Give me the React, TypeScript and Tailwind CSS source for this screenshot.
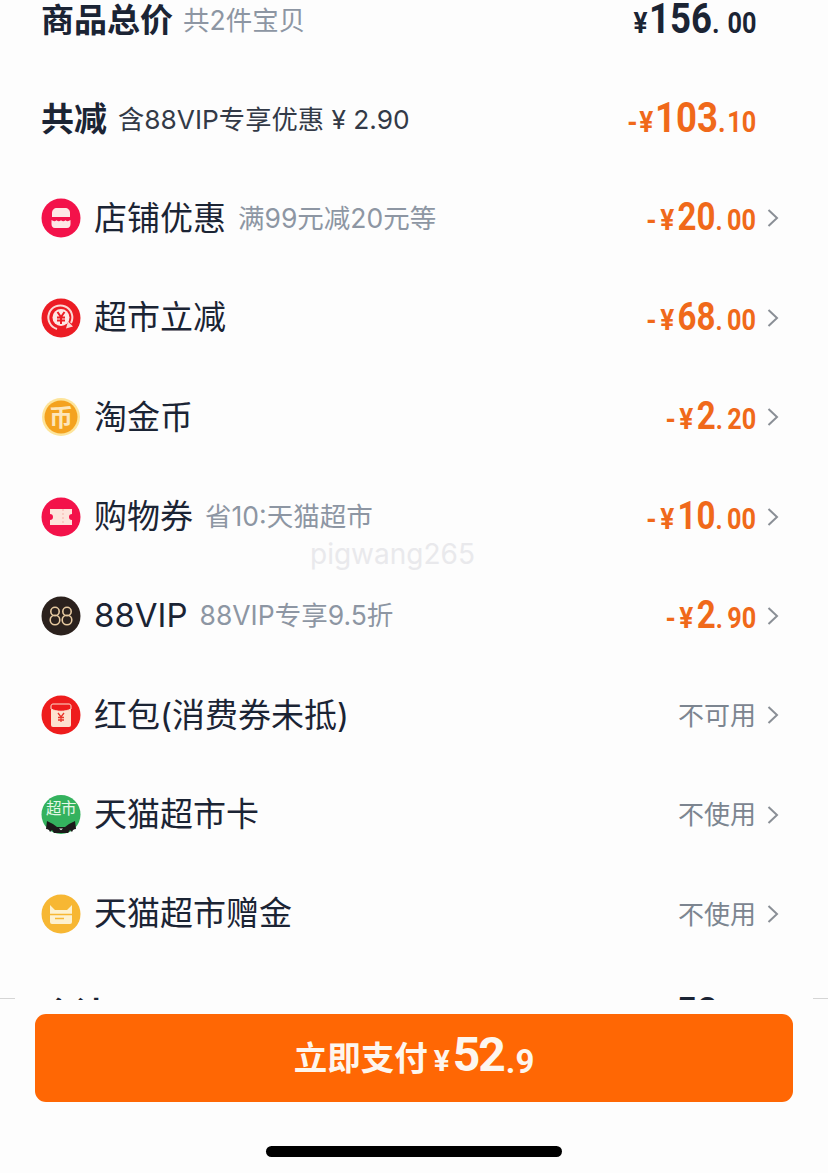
import React from "react";

const CJK = "font-['Inter','Noto_Sans_CJK_SC',sans-serif]";
const NUM = "font-['Roboto','Noto_Sans_CJK_SC',sans-serif]";

function Icon({ kind }: { kind: string }) {
  const cls = "w-10 h-10 shrink-0";
  if (kind === "shop")
    return (
      <svg viewBox="0 0 40 40" className={cls}>
        <circle cx="20" cy="20" r="19.5" fill="#f3124a" />
        <path d="M11 19v-4c0-3 2-5 5-5h8c3 0 5 2 5 5v4z" fill="#fde8e6" />
        <path d="M10.500 22c2 1.500 3.500 1.500 5 .2c1.500 1.300 3 1.300 4.500 0c1.500 1.300 3 1.300 4.500 0c1.500 1.300 3 1.300 5 -.2v4c0 2 -1 4 -3.500 4H14c-2.500 0-3.500-2-3.500-4z" fill="#fde8e6" />
      </svg>
    );
  if (kind === "cut")
    return (
      <svg viewBox="0 0 40 40" className={cls}>
        <circle cx="20" cy="20" r="19.5" fill="#ec1c24" />
        <path d="M16 31a12 12 0 1 1 14-6" fill="none" stroke="#fbd9d5" strokeWidth="2" />
        <path d="M27 23.500l5 5-7 2z" fill="#fbd9d5" />
        <circle cx="20" cy="19.500" r="8.500" fill="#fde8e4" />
        <path d="M16.500 14l3.500 5 3.500-5M16 19.500h8M16 22.500h8M20 19v7" fill="none" stroke="#ec1c24" strokeWidth="2" />
      </svg>
    );
  if (kind === "coin")
    return (
      <svg viewBox="0 0 40 40" className={cls}>
        <circle cx="20" cy="20" r="19" fill="#fde49a" />
        <circle cx="20" cy="20" r="16.500" fill="#f4a21f" />
        <text x="20" y="28.500" textAnchor="middle" fontSize="24" fontWeight="700" fill="#fde6ba" fontFamily="'Noto Sans CJK SC',sans-serif">币</text>
      </svg>
    );
  if (kind === "ticket")
    return (
      <svg viewBox="0 0 40 40" className={cls}>
        <circle cx="20" cy="20" r="19.500" fill="#f3124a" />
        <path d="M9 12h22v5a3 3 0 0 0 0 6v5H9v-5a3 3 0 0 0 0-6z" fill="#fde4dc" />
        <path d="M22 12v16" fill="none" stroke="#f9b9b4" strokeWidth="1.200" strokeDasharray="2 2" />
      </svg>
    );
  if (kind === "vip")
    return (
      <svg viewBox="0 0 40 40" className={cls}>
        <circle cx="20" cy="20" r="19.500" fill="#2b211d" />
        <g fill="none" stroke="#e6c9a0" strokeWidth="1.600">
          <circle cx="14" cy="15.500" r="4.200" />
          <circle cx="14" cy="24" r="4.800" />
          <circle cx="26" cy="15.500" r="4.200" />
          <circle cx="26" cy="24" r="4.800" />
        </g>
      </svg>
    );
  if (kind === "red")
    return (
      <svg viewBox="0 0 40 40" className={cls}>
        <circle cx="20" cy="20" r="19.500" fill="#ee1c1c" />
        <rect x="10" y="9" width="20" height="23" rx="2" fill="#fde2cf" />
        <path d="M10 11c0-1 1-2 2-2h16c1 0 2 1 2 2v3c-6 3-14 3-20 0z" fill="#ee1c1c" stroke="#fde2cf" strokeWidth="1" />
        <path d="M17 18l3 4 3-4M17 22.500h6M17 25h6M20 22v5" fill="none" stroke="#e8352a" strokeWidth="1.300" />
      </svg>
    );
  if (kind === "cat")
    return (
      <svg viewBox="0 0 40 40" className={cls}>
        <circle cx="20" cy="19.500" r="19.500" fill="#34b25e" />
        <text x="20" y="19" textAnchor="middle" fontSize="15.500" fill="#e4f7e6" fontFamily="'Noto Sans CJK SC',sans-serif" letterSpacing="-0.500">超市</text>
        <path d="M5 34l1-8 6 3 4 3h8l4-3 6-3 1 8c-1 0-2 .5-3 1l-1 2-2-2-2 3h-14l-2-3-2 2-1-2c-1-.5-2-1-3-1z" fill="#1c1a1a" />
        <path d="M18 33.500h4l-2 1.800z" fill="#e8e8e8" />
      </svg>
    );
  return (
    <svg viewBox="0 0 40 40" className={cls}>
      <circle cx="20" cy="20" r="19.500" fill="#f7b733" />
      <path d="M9 11l5 5h12l5-5v17a2 2 0 0 1-2 2H11a2 2 0 0 1-2-2z" fill="#fdf1cf" />
      <path d="M9 20.500h22" stroke="#f7b733" strokeWidth="1.500" />
      <path d="M14 24.500h9" stroke="#f7b733" strokeWidth="1.500" />
    </svg>
  );
}

function Money({ prefix, int, dec, tone, big, dotCls }: { prefix?: string; int: string; dec: string; tone: string; big?: boolean; dotCls?: string }) {
  return (
    <span className={`${NUM} ${tone} mb-[2px] inline-block origin-right scale-x-[0.87] font-bold leading-none whitespace-nowrap`}>
      {prefix ? <span className={big ? "text-[30px] tracking-[2px]" : "text-[30px] tracking-[4px]"}>{prefix}</span> : null}
      <span className={big ? "text-[30px] tracking-[2px]" : "text-[30px] tracking-[4px]"}>¥</span>
      <span className={big ? "text-[42px]" : "text-[38px]"}>{int}</span>
      <span className={dotCls ?? (big ? "text-[30px] tracking-[2px]" : "text-[28px] tracking-[5px]")}>.</span>
      <span className="text-[29px]">{dec}</span>
    </span>
  );
}

function Chevron() {
  return (
    <svg viewBox="0 0 12 20" className="w-3 h-5 shrink-0 ml-[11px]">
      <path d="M1.500 2l8.500 8-8.500 8" fill="none" stroke="#8a8f96" strokeWidth="2" />
    </svg>
  );
}

const rows = [
  { icon: "shop", title: "店铺优惠", sub: "满99元减20元等", int: "20", dec: "00" },
  { icon: "cut", title: "超市立减", int: "68", dec: "00" },
  { icon: "coin", title: "淘金币", int: "2", dec: "20" },
  { icon: "ticket", title: "购物券", sub: "省10:天猫超市", int: "10", dec: "00" },
  { icon: "vip", title: "88VIP", sub: "88VIP专享9.5折", int: "2", dec: "90" },
  { icon: "red", title: "红包(消费券未抵)", status: "不可用" },
  { icon: "cat", title: "天猫超市卡", status: "不使用" },
  { icon: "gift", title: "天猫超市赠金", status: "不使用" },
];

export default function App() {
  return (
    <div className={`${CJK} relative w-[828px] h-[1173px] overflow-hidden bg-[#fdfdfd] text-[#1b2434] flex flex-col`}>
      <div className="h-[1000px] shrink-0 overflow-hidden pl-[41px] pr-[49px]">
        <div className="-mt-[30px]">
          <div className="h-[99.4px] flex items-center">
            <span className="mt-[2px] text-[33px] font-bold">商品总价</span>
            <span className="mt-[2px] ml-[10px] text-[26.500px] text-[#8d96a3]">共2件宝贝</span>
            <span className="ml-auto mr-[23px] flex">
              <Money int="156" dec="00" tone="text-[#1b2434]" big dotCls="text-[30px] tracking-[9px]" />
            </span>
          </div>
          <div className="h-[99.4px] flex items-center">
            <span className="mt-[2px] text-[33px] font-bold">共减</span>
            <span className="mt-[2px] ml-[11px] text-[26.300px] text-[#333a47]">含88VIP专享优惠 ¥ 2.90</span>
            <span className="ml-auto mr-[23px] flex">
              <Money prefix="-" int="103" dec="10" tone="text-[#f0691a]" big />
            </span>
          </div>
          {rows.map((r) => (
            <div key={r.title} className="h-[99.4px] flex items-center">
              <Icon kind={r.icon} />
              <span className="ml-[13px] text-[33px] whitespace-nowrap">{r.title}</span>
              {r.sub ? <span className="ml-[12px] text-[26.500px] text-[#8d96a3] whitespace-nowrap">{r.sub}</span> : null}
              <span className="ml-auto flex">
                {r.status ? (
                  <span className="text-[26px] text-[#7c8590]">{r.status}</span>
                ) : (
                  <Money prefix="-" int={r.int as string} dec={r.dec as string} tone="text-[#f0691a]" />
                )}
              </span>
              <Chevron />
            </div>
          ))}
          <div className="h-[99.4px] flex items-center">
            <span className="mt-[2px] text-[33px] font-bold">合计</span>
            <span className="ml-auto mr-[23px] flex">
              <Money int="52" dec="90" tone="text-[#1b2434]" big />
            </span>
          </div>
        </div>
      </div>
      <div className="flex-1 bg-[#fdfdfd] flex flex-col items-center relative">
        <div className="absolute left-0 -top-[2px] w-[15px] h-px bg-[#d5d5d5]" />
        <div className="absolute right-0 -top-[2px] w-[15px] h-px bg-[#d5d5d5]" />
        <button className="mt-[14px] w-[758px] h-[88px] rounded-[11px] bg-[#ff6704] text-[#fdf6ee] flex items-center justify-center font-bold">
          <span className="text-[33.500px]">立即支付</span>
          <span className={`${NUM} ml-[6px] text-[30px] leading-none mt-[6px]`}>¥</span>
          <span className={`${NUM} ml-[3px] text-[48px] leading-none tracking-[-2px] -mt-[6px]`}>52</span>
          <span className={`${NUM} ml-[2px] text-[33px] leading-none mt-[6px]`}>.9</span>
        </button>
        <div className="mt-[44px] w-[296px] h-[11px] rounded-full bg-black" />
      </div>
      <div className="absolute left-[310px] top-[537px] text-[28px] leading-[34px] text-[#e9e9ec]">pigwang265</div>
    </div>
  );
}
